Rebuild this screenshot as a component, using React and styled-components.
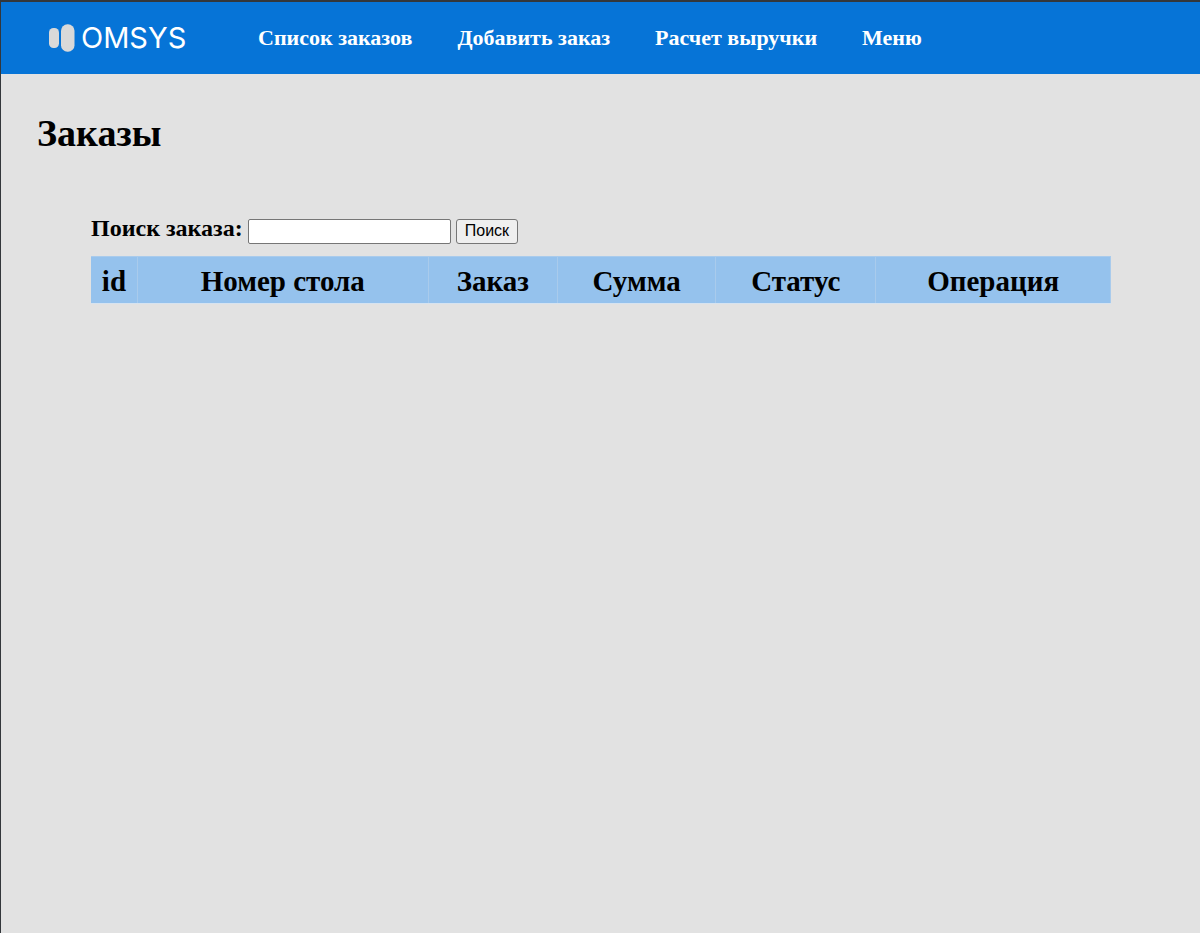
import React from "react";
import styled, { createGlobalStyle } from "styled-components";

const GlobalStyle = createGlobalStyle`
  *, *::before, *::after { box-sizing: border-box; }
  body {
    margin: 0;
    background: #e2e2e2;
    color: #000;
    font-family: "Liberation Serif", "Times New Roman", serif;
  }
`;

const Page = styled.div`
  min-height: 100vh;
  border-top: 2px solid #33373b;
  border-left: 1px solid #33373b;
`;

const Header = styled.header`
  display: flex;
  align-items: center;
  height: 72px;
  padding: 0 48px;
  background: #0674d7;
`;

const LogoLink = styled.a`
  display: flex;
  align-items: center;
  gap: 6px;
  width: 161px;
  color: #fff;
  font: 400 29px/36px Inter, sans-serif;
  text-decoration: none;
`;

const Nav = styled.nav`
  display: flex;
  gap: 45px;
  margin-left: 48px;
`;

const NavLink = styled.a`
  color: #fff;
  font-size: 22px;
  font-weight: 700;
  line-height: 26px;
  text-decoration: none;
  white-space: nowrap;
`;

const Title = styled.h1`
  margin: 0;
  padding: 37px 36px 0;
  font-size: 38px;
  line-height: 44px;
`;

const Orders = styled.section`
  margin: 60px 89px 0 90px;
`;

const SearchForm = styled.form`
  display: flex;
  align-items: center;
  gap: 5px;
  height: 32px;
`;

const SearchLabel = styled.label`
  font-size: 24px;
  font-weight: 700;
  line-height: 26px;
  padding-bottom: 6px;
`;

const SearchInput = styled.input`
  width: 203px;
  height: 25px;
  padding: 1px 2px;
  border: 1px solid #767676;
  border-radius: 2px;
  background: #fff;
  font: 16px "Liberation Sans", Arial, sans-serif;
`;

const SearchButton = styled.button`
  height: 25px;
  padding: 0 8px;
  border: 1px solid #767676;
  border-radius: 3px;
  background: #efefef;
  color: #000;
  font: 16px/20px "Liberation Sans", Arial, sans-serif;
`;

const OrdersTable = styled.table`
  width: 100%;
  margin-top: 9px;
  table-layout: fixed;
  border-collapse: separate;
  border-spacing: 0;
  border-bottom: 1px solid #d6e3f0;
`;

const HeadCell = styled.th`
  width: ${({ $width }) => $width};
  height: 47px;
  padding: 2px 0 0;
  border-top: 1px solid #a9cbec;
  border-right: 1px solid #a9cbec;
  background: #95c2ed;
  font-size: 29px;
  line-height: 32px;
`;

const links = ["Список заказов", "Добавить заказ", "Расчет выручки", "Меню"];

const columns = [
  { name: "id", width: "4.6%" },
  { name: "Номер стола", width: "28.5%" },
  { name: "Заказ", width: "12.7%" },
  { name: "Сумма", width: "15.5%" },
  { name: "Статус", width: "15.7%" },
  { name: "Операция", width: "23%" },
];

function LogoMark() {
  return (
    <svg width="26" height="28" viewBox="0 0 26 28" fill="#d9d9d9" aria-hidden="true">
      <rect x="0" y="4" width="10" height="20" rx="4.5" />
      <rect x="12" y="0.3" width="13.5" height="27.4" rx="6.5" />
    </svg>
  );
}

export default function App() {
  return (
    <Page>
      <GlobalStyle />
      <Header>
        <LogoLink href="#">
          <LogoMark />
          OMSYS
        </LogoLink>
        <Nav>
          {links.map((text) => (
            <NavLink href="#" key={text}>{text}</NavLink>
          ))}
        </Nav>
      </Header>
      <main>
        <Title>Заказы</Title>
        <Orders>
          <SearchForm onSubmit={(e) => e.preventDefault()}>
            <SearchLabel htmlFor="order-search">Поиск заказа:</SearchLabel>
            <SearchInput id="order-search" type="text" />
            <SearchButton type="submit">Поиск</SearchButton>
          </SearchForm>
          <OrdersTable>
            <thead>
              <tr>
                {columns.map(({ name, width }) => (
                  <HeadCell key={name} scope="col" $width={width}>{name}</HeadCell>
                ))}
              </tr>
            </thead>
          </OrdersTable>
        </Orders>
      </main>
    </Page>
  );
}
